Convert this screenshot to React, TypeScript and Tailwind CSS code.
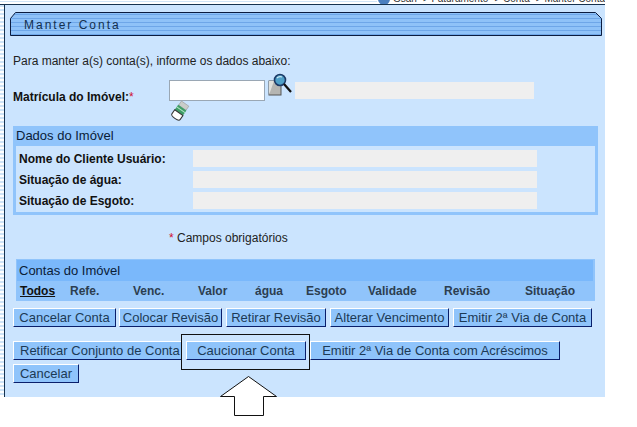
import React from "react";

const Btn = ({ w, children }: { w: string; children: React.ReactNode }) => (
  <button className={`h-[19px] ${w} shrink-0 bg-[#8fc4fb] border border-t-white border-l-white border-r-[#0a1f6b] border-b-[#0a1f6b] text-[13px] leading-[15px] text-[#1c3a55] whitespace-nowrap flex items-center justify-center overflow-hidden`}>
    {children}
  </button>
);

const Field = ({ label }: { label: string }) => (
  <div className="flex items-center h-[17px]">
    <span className="w-[177px] pl-[3px] font-bold text-[12px] text-[#111]">{label}</span>
    <div className="w-[344px] h-[17px] bg-[#efefef]" />
  </div>
);

const cols: [string, string][] = [
  ["Refe.", "w-[63px]"],
  ["Venc.", "w-[65px]"],
  ["Valor", "w-[57px]"],
  ["água", "w-[51px]"],
  ["Esgoto", "w-[62px]"],
  ["Validade", "w-[76px]"],
  ["Revisão", "w-[81px]"],
  ["Situação", "w-[60px]"],
];

export default function App() {
  return (
    <div className="relative w-[637px] h-[427px] bg-white overflow-hidden font-['Liberation_Sans',Arial,sans-serif] text-[#222]">
      {/* top breadcrumb strip */}
      <div className="h-[5px] w-[605px] relative overflow-hidden border-b border-[#16324f] bg-[linear-gradient(#fff_0,#fff_1px,#cfe4f7_1px,#cfe4f7_2px,#fff_2px)]">
        <div className="absolute right-0 top-[-8px] flex items-center gap-[3px] bg-white pl-[1px] text-[10px] leading-[14px] text-[#333] whitespace-nowrap">
          <span className="w-[12px] h-[12px] rounded-full bg-[#4a7fc0]" />
          <span>Gsan -&gt; Faturamento -&gt; Conta -&gt; Manter Conta</span>
        </div>
      </div>
      <div className="flex h-[392px] w-[605px]">
        <div className="w-[5px] h-full border-r border-[#16324f] bg-[repeating-linear-gradient(#cfe4f7_0,#cfe4f7_2px,#fff_2px,#fff_4px)]" />
        {/* main panel */}
        <div className="flex-1 bg-[#cbe4fe] flex flex-col">
          {/* title */}
          <div className="relative ml-[5px] mt-[7px] w-[592px] h-[24px] flex items-center pl-[14px] pt-px">
            <svg className="absolute inset-0" width="592" height="24" viewBox="0 0 592 24">
              <defs>
                <pattern id="st" width="4" height="4" patternUnits="userSpaceOnUse">
                  <rect width="4" height="4" fill="#8fc2f8" />
                  <rect width="4" height="1" y="2" fill="#6ea6e8" />
                </pattern>
              </defs>
              <path d="M.5 23.5V6.5L5.5.5H585.5L591.5 6.5V23.5Z" fill="url(#st)" stroke="#0b1c3f" />
            </svg>
            <span className="relative text-[12px] tracking-[2px] text-[#14304f] leading-[14px]">Manter Conta</span>
          </div>

          <p className="ml-[8px] mt-[18px] text-[12px] leading-[14px] text-[#222]">Para manter a(s) conta(s), informe os dados abaixo:</p>

          {/* matricula */}
          <div className="flex mt-[5px] h-[54px] ml-[8px]">
            <div className="w-[156px] pt-[17px] font-bold text-[12px] leading-[14px] text-[#111]">
              Matrícula do Imóvel:<span className="text-[#d01030] font-normal">*</span>
            </div>
            <div className="flex flex-col w-[99px]">
              <div className="h-[21px] w-[96px] mt-[7px] bg-white border border-[#9aa7b4]" />
              <svg width="20" height="21" viewBox="0 0 20 21" className="ml-[1px]">
                <g transform="rotate(35 10 10)">
                  <rect x="5.5" y="1" width="9" height="5" fill="#c9ccc9" stroke="#999" strokeWidth=".6" />
                  <rect x="5" y="6" width="10" height="6" fill="#3f9e68" />
                  <rect x="5" y="8" width="10" height="1" fill="#b6e6c8" />
                  <path d="M5 12H15V17Q15 19 10 19T5 17Z" fill="#fff" stroke="#333" strokeWidth="1" />
                </g>
              </svg>
            </div>
            <svg width="26" height="24" viewBox="0 0 26 24">
              <rect x="1" y="8" width="12" height="14" fill="#b5b5b2" stroke="#555" strokeWidth="1" />
              <path d="M1 8L6 8L1 22Z" fill="#e0e0dc" />
              <circle cx="12" cy="7" r="5.5" fill="#4fa0c8" stroke="#1d3a66" strokeWidth="1.6" />
              <path d="M9 5Q11 3 14 4" stroke="#cfeaf5" strokeWidth="1.2" fill="none" />
              <path d="M16 11L23 19" stroke="#111" strokeWidth="2.2" />
            </svg>
            <div className="w-[239px] h-[17px] bg-[#efefef] mt-[9px] ml-[1px]" />
          </div>

          {/* dados */}
          <div className="ml-[8px] mt-[-1px] w-[585px] h-[89px] border-[3px] border-t-0 border-[#90c4fb] flex flex-col">
            <div className="h-[20px] -mx-[1px] bg-[#90c4fb] pl-[1px] flex items-center text-[13px] text-[#0a2038]">Dados do Imóvel</div>
            <div className="flex flex-col gap-[4px] mt-[4px]">
              <Field label="Nome do Cliente Usuário:" />
              <Field label="Situação de água:" />
              <Field label="Situação de Esgoto:" />
            </div>
          </div>

          <div className="ml-[164px] mt-[16px] text-[12px] leading-[14px] text-[#222]">
            <span className="text-[#d01030]">*</span> Campos obrigatórios
          </div>

          {/* contas */}
          <div className="ml-[11px] mt-[14px] w-[579px] h-[42px] bg-[#90c4fb] flex flex-col">
            <div className="h-[21px] mt-px ml-px mr-[2px] bg-[#7ab8fb] pl-[2px] flex items-center text-[13px] text-[#0a2038]">Contas do Imóvel</div>
            <div className="flex items-center h-[20px] pl-[4px] font-bold text-[12px] text-[#2c3e50]">
              <span className="w-[50px] underline text-[#111]">Todos</span>
              {cols.map(([t, w]) => (
                <span key={t} className={w}>{t}</span>
              ))}
            </div>
          </div>

          {/* buttons */}
          <div className="ml-[8px] mt-[7px] flex gap-[3px]">
            <Btn w="w-[103px]">Cancelar Conta</Btn>
            <Btn w="w-[103px] mr-px">Colocar Revisão</Btn>
            <Btn w="w-[100px] mr-px">Retirar Revisão</Btn>
            <Btn w="w-[119px] mr-px">Alterar Vencimento</Btn>
            <Btn w="w-[139px]">Emitir 2ª Via de Conta</Btn>
          </div>
          <div className="ml-[8px] mt-[14px] flex gap-[4px]">
            <Btn w="w-[169px] !justify-start pl-[6px]">Retificar Conjunto de Conta</Btn>
            <Btn w="w-[120px]">Caucionar Conta</Btn>
            <Btn w="w-[250px]">Emitir 2ª Via de Conta com Acréscimos</Btn>
          </div>
          <div className="ml-[8px] mt-[4px]">
            <Btn w="w-[66px]">Cancelar</Btn>
          </div>
        </div>
      </div>

      {/* annotation overlay */}
      <div className="absolute left-[181px] top-[334px] w-[129px] h-[36px] border border-[#111]" />
      <svg className="absolute left-[218px] top-[374px]" width="62" height="44" viewBox="0 0 62 44">
        <path d="M2.5 22.5L30.5 2.5L58.5 22.5H45.5V41.5H16.5V22.5Z" fill="#fff" stroke="#111" />
      </svg>
    </div>
  );
}
